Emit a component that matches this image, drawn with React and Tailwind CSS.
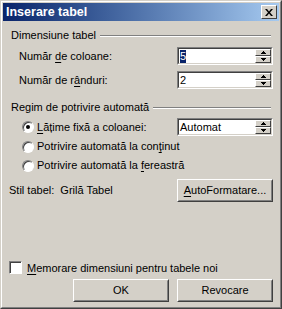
import React from 'react'

const font = { fontFamily: '"Liberation Sans", Arial, sans-serif' }

function U({ children }) {
  return <span className="underline underline-offset-[2px]">{children}</span>
}

function GroupHeader({ children }) {
  return (
    <div className="flex items-center h-[13px] pl-[8px] pr-[8px]">
      <span className="whitespace-nowrap pr-[4px]">{children}</span>
      <div className="flex-1 border-t border-t-[#808080] border-b border-b-white" />
    </div>
  )
}

function Btn({ children, className = '' }) {
  return (
    <div className={`h-[23px] border border-t-white border-l-white border-r-[#404040] border-b-[#404040] ${className}`}>
      <div className="h-full flex items-center justify-center border border-t-[#d4d0c8] border-l-[#d4d0c8] border-r-[#808080] border-b-[#808080]">
        {children}
      </div>
    </div>
  )
}

function Arrow({ up }) {
  return (
    <div className="w-[16px] h-[8px] bg-[#d4d0c8] border-t border-l border-t-white border-l-white border-r border-b border-r-[#404040] border-b-[#404040] flex items-center justify-center">
      <svg width="5" height="3" viewBox="0 0 5 3">
        {up ? <path d="M2 0h1v1h1v1h1v1H0V2h1V1h1z" fill="#000" /> : <path d="M0 0h5v1H4v1H3v1H2V2H1V1H0z" fill="#000" />}
      </svg>
    </div>
  )
}

function Spin({ value, selected }) {
  return (
    <div className="w-[96px] h-[18px] border border-t-[#808080] border-l-[#808080] border-r-white border-b-white">
      <div className="h-full flex bg-white border border-t-[#404040] border-l-[#404040] border-r-[#d4d0c8] border-b-[#d4d0c8]">
        <div className="flex-1 flex items-center pl-[1px]">
          {selected ? <span className="bg-[#0a246a] text-white leading-[13px]">{value}</span> : <span className="leading-[13px]">{value}</span>}
        </div>
        <div className="flex flex-col">
          <Arrow up />
          <Arrow />
        </div>
      </div>
    </div>
  )
}

function Radio({ checked }) {
  return (
    <div className="w-[12px] h-[12px] rounded-full bg-white border border-t-[#808080] border-l-[#808080] border-r-white border-b-white flex items-center justify-center shadow-[inset_1px_1px_0_#404040]">
      {checked && <div className="w-[4px] h-[4px] rounded-full bg-black" />}
    </div>
  )
}

export default function App() {
  return (
    <div style={font} className="w-[282px] h-[309px] bg-[#d4d0c8] text-[11px] text-black border border-t-[#d4d0c8] border-l-[#d4d0c8] border-r-[#404040] border-b-[#404040]">
      <div className="h-full flex flex-col border border-t-white border-l-white border-r-[#808080] border-b-[#808080] p-[1px]">
        <div className="h-[18px] flex items-center justify-between bg-gradient-to-r from-[#0a246a] to-[#a6caf0] pl-[3px] pr-[2px]">
          <span className="text-white font-bold text-[12.5px]">Inserare tabel</span>
          <div className="w-[16px] h-[14px] border border-t-white border-l-white border-r-[#404040] border-b-[#404040] bg-[#d4d0c8] flex items-center justify-center">
            <svg width="8" height="7" viewBox="0 0 8 7">
              <path d="M0 0h2l2 2.5L6 0h2L5 3.5 8 7H6L4 4.5 2 7H0l3-3.5z" fill="#000" />
            </svg>
          </div>
        </div>

        <div className="mt-[8px]">
          <GroupHeader>Dimensiune tabel</GroupHeader>
        </div>

        <div className="mt-[5px] flex items-center justify-between pl-[16px] pr-[6px]">
          <span>Număr <U>d</U>e coloane:</span>
          <Spin value="5" selected />
        </div>
        <div className="mt-[6px] flex items-center justify-between pl-[16px] pr-[6px]">
          <span>Număr de r<U>â</U>nduri:</span>
          <Spin value="2" />
        </div>

        <div className="mt-[12px]">
          <GroupHeader>Regim de potrivire automată</GroupHeader>
        </div>

        <div className="mt-[4px] flex items-center justify-between pl-[19px] pr-[6px]">
          <div className="flex items-center gap-[3px]">
            <Radio checked />
            <span><U>L</U>ățime fixă a coloanei:</span>
          </div>
          <Spin value="Automat" />
        </div>
        <div className="mt-[3px] flex items-center gap-[3px] pl-[19px] h-[15px]">
          <Radio />
          <span>Potrivire automată la con<U>ț</U>inut</span>
        </div>
        <div className="mt-[4px] flex items-center gap-[3px] pl-[19px] h-[15px]">
          <Radio />
          <span>Potrivire automată la <U>f</U>ereastră</span>
        </div>

        <div className="mt-[6px] flex items-center justify-between pl-[6px] pr-[6px]">
          <span>Stil tabel:&nbsp;&nbsp;Grilă Tabel</span>
          <Btn className="w-[96px]">
            <span><U>A</U>utoFormatare...</span>
          </Btn>
        </div>

        <div className="flex-1" />

        <div className="flex items-center gap-[5px] pl-[6px]">
          <div className="w-[13px] h-[13px] bg-white border border-t-[#808080] border-l-[#808080] border-r-white border-b-white shadow-[inset_1px_1px_0_#404040]" />
          <span><U>M</U>emorare dimensiuni pentru tabele noi</span>
        </div>

        <div className="mt-[3px] mb-[4px] flex justify-end gap-[8px] pr-[6px]">
          <Btn className="w-[96px]">OK</Btn>
          <Btn className="w-[96px]">Revocare</Btn>
        </div>
      </div>
    </div>
  )
}
